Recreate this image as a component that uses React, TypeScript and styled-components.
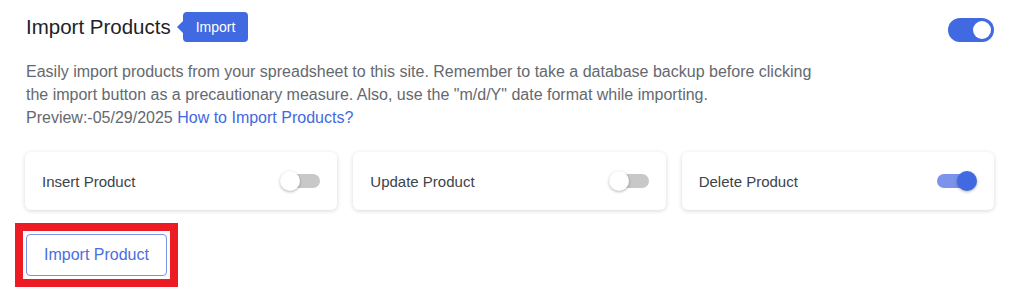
import styled, { createGlobalStyle } from 'styled-components';

const GlobalStyle = createGlobalStyle`
	* {
		box-sizing: border-box;
	}

	body {
		margin: 0;
		background: #ffffff;
		font-family: 'Liberation Sans', Arial, sans-serif;
	}
`;

const options = [
	{ label: 'Insert Product', on: false },
	{ label: 'Update Product', on: false },
	{ label: 'Delete Product', on: true },
];

export default function App() {
	return (
		<>
			<GlobalStyle />
			<Page>
				<HeaderRow>
					<TitleGroup>
						<Title>Import Products</Title>
						<Tag>Import</Tag>
					</TitleGroup>
					<BigSwitch aria-label="enable import" />
				</HeaderRow>

				<Description>
					Easily import products from your spreadsheet to this site. Remember to take a database backup before clicking
					<br />
					the import button as a precautionary measure. Also, use the "m/d/Y" date format while importing.
					<br />
					Preview:-05/29/2025 <HelpLink href="#">How to Import Products?</HelpLink>
				</Description>

				<OptionGrid>
					{options.map((option) => (
						<OptionCard key={option.label}>
							<OptionLabel>{option.label}</OptionLabel>
							<SmallSwitch $on={option.on}>
								<Knob $on={option.on} />
							</SmallSwitch>
						</OptionCard>
					))}
				</OptionGrid>

				<Highlight>
					<ImportButton>Import Product</ImportButton>
				</Highlight>
			</Page>
		</>
	);
}

const Page = styled.div`
	width: 1024px;
	padding: 12px 30px 0 25px;
`;

const HeaderRow = styled.div`
	display: flex;
	justify-content: space-between;
	align-items: center;
	height: 30px;
`;

const TitleGroup = styled.div`
	display: flex;
	align-items: center;
	gap: 12px;
`;

const Title = styled.h2`
	margin: 0 0 0 1px;
	font-size: 20.5px;
	font-weight: 400;
	color: #1d2327;
`;

const Tag = styled.span`
	position: relative;
	display: inline-flex;
	align-items: center;
	height: 30px;
	padding: 0 13px;
	border-radius: 4px;
	background: #4169e1;
	color: #ffffff;
	font-size: 14px;

	&::before {
		content: '';
		position: absolute;
		left: -6px;
		top: 50%;
		margin-top: -6px;
		border-top: 6px solid transparent;
		border-bottom: 6px solid transparent;
		border-right: 6px solid #4169e1;
	}
`;

const BigSwitch = styled.span`
	position: relative;
	display: block;
	width: 46px;
	height: 24px;
	margin-top: 5px;
	border-radius: 12px;
	background: #4169e1;

	&::after {
		content: '';
		position: absolute;
		right: 3px;
		top: 3px;
		width: 18px;
		height: 18px;
		border-radius: 50%;
		background: #ffffff;
	}
`;

const Description = styled.p`
	margin: 18px 0 0 1px;
	font-size: 16px;
	line-height: 23px;
	color: #646970;
`;

const HelpLink = styled.a`
	color: #4169e1;
	text-decoration: none;
`;

const OptionGrid = styled.div`
	display: grid;
	grid-template-columns: repeat(3, 1fr);
	gap: 16px;
	margin-top: 23px;
`;

const OptionCard = styled.div`
	display: flex;
	align-items: center;
	justify-content: space-between;
	height: 58px;
	padding: 0 17px;
	border-radius: 6px;
	background: #ffffff;
	box-shadow: 0 1px 4px rgba(0, 0, 0, 0.16);
`;

const OptionLabel = styled.span`
	font-size: 15px;
	color: #3c434a;
`;

const SmallSwitch = styled.span<{ $on: boolean }>`
	position: relative;
	display: block;
	width: 40px;
	height: 20px;

	&::before {
		content: '';
		position: absolute;
		top: 3px;
		left: ${(p) => (p.$on ? '0' : '4px')};
		width: 36px;
		height: 14px;
		border-radius: 7px;
		background: ${(p) => (p.$on ? '#7b93e8' : '#c8c8c8')};
	}
`;

const Knob = styled.span<{ $on: boolean }>`
	position: absolute;
	top: 0;
	left: ${(p) => (p.$on ? '20px' : '0')};
	width: 20px;
	height: 20px;
	border-radius: 50%;
	background: ${(p) => (p.$on ? '#4169e1' : '#ffffff')};
	box-shadow: 0 1px 3px rgba(0, 0, 0, 0.3);
`;

const Highlight = styled.div`
	display: inline-block;
	margin: 13px 0 0 -10px;
	padding: 3px;
	border: 8px solid #ed1c24;
`;

const ImportButton = styled.button`
	display: block;
	height: 42px;
	padding: 0 17px;
	border: 1px solid #7b93e8;
	border-radius: 4px;
	background: #ffffff;
	color: #4a6ee0;
	font-family: 'Liberation Sans', Arial, sans-serif;
	font-size: 16px;
	cursor: pointer;
`;
